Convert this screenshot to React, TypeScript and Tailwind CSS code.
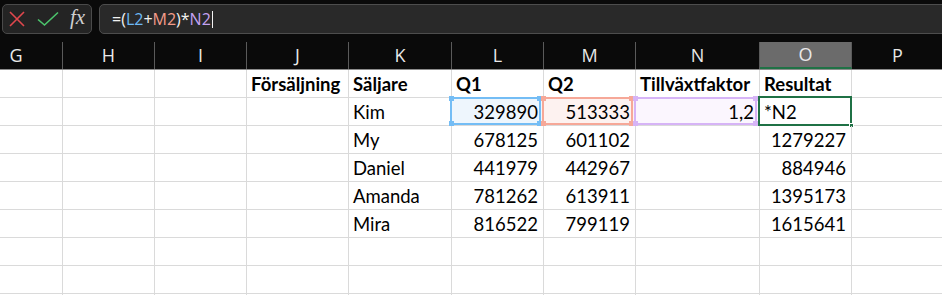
type MarkT = "blue" | "red" | "purple" | "active";

type CellT = {
  text?: string;
  bold?: boolean;
  right?: boolean;
  mark?: MarkT;
};

// column widths G..P, border included
const colWidths = [
  "w-[93px] -ml-[30px]",
  "w-[92px]",
  "w-[92px]",
  "w-[102px]",
  "w-[103px]",
  "w-[92px]",
  "w-[92px]",
  "w-[124px]",
  "w-[92px]",
  "w-[92px]",
];

const letters = ["G", "H", "I", "J", "K", "L", "M", "N", "O", "P"];

const people: [string, string, string, string][] = [
  ["My", "678125", "601102", "1279227"],
  ["Daniel", "441979", "442967", "884946"],
  ["Amanda", "781262", "613911", "1395173"],
  ["Mira", "816522", "799119", "1615641"],
];

function buildRows(): CellT[][] {
  const empty = (): CellT => ({});
  const rows: CellT[][] = [];

  rows.push([
    empty(),
    empty(),
    empty(),
    { text: "Försäljning", bold: true },
    { text: "Säljare", bold: true },
    { text: "Q1", bold: true },
    { text: "Q2", bold: true },
    { text: "Tillväxtfaktor", bold: true },
    { text: "Resultat", bold: true },
    empty(),
  ]);

  rows.push([
    empty(),
    empty(),
    empty(),
    empty(),
    { text: "Kim" },
    { text: "329890", right: true, mark: "blue" },
    { text: "513333", right: true, mark: "red" },
    { text: "1,2", right: true, mark: "purple" },
    { text: "*N2", mark: "active" },
    empty(),
  ]);

  people.forEach(([name, q1, q2, res]) => {
    rows.push([
      empty(),
      empty(),
      empty(),
      empty(),
      { text: name },
      { text: q1, right: true },
      { text: q2, right: true },
      empty(),
      { text: res, right: true },
      empty(),
    ]);
  });

  for (let i = 0; i < 3; i++) {
    rows.push(letters.map(() => empty()));
  }
  return rows;
}

const markStyles: Record<Exclude<MarkT, "active">, { bg: string; border: string; dot: string }> = {
  blue: { bg: "bg-[#eef6fd]", border: "border-[#74bdf5]", dot: "bg-[#74bdf5]" },
  red: { bg: "bg-[#fdf2f0]", border: "border-[#f6a898]", dot: "bg-[#f6a898]" },
  purple: { bg: "bg-[#fbf6fe]", border: "border-[#d6b4f6]", dot: "bg-[#d6b4f6]" },
};

function RangeBox({ mark }: { mark: MarkT }) {
  if (mark === "active") {
    return (
      <div className="absolute -top-[2px] -left-[2px] -right-px -bottom-px border-2 border-[#1f7145]">
        <div className="absolute -right-[4px] -bottom-[4px] w-[5px] h-[5px] bg-[#1f7145] border border-white" />
      </div>
    );
  }
  const s = markStyles[mark];
  return (
    <div className={`absolute -top-px -left-[2px] right-[2px] bottom-0 border-2 ${s.border}`}>
      <div className={`absolute -top-[3px] -left-[3px] w-[5px] h-[5px] ${s.dot}`} />
      <div className={`absolute -top-[3px] -right-[3px] w-[5px] h-[5px] ${s.dot}`} />
      <div className={`absolute -bottom-[3px] -left-[3px] w-[5px] h-[5px] ${s.dot}`} />
      <div className={`absolute -bottom-[3px] -right-[3px] w-[5px] h-[5px] ${s.dot}`} />
    </div>
  );
}

function Cell({ cell, width }: { cell: CellT; width: string }) {
  const bg = cell.mark && cell.mark !== "active" ? markStyles[cell.mark].bg : "";
  return (
    <div
      className={`relative shrink-0 h-full border-r border-[#dadada] flex items-end pb-[2px] pl-[4px] pr-[5px] leading-[22px] whitespace-nowrap ${width} ${bg} ${
        cell.right ? "justify-end" : ""
      } ${cell.bold ? "font-bold" : ""}`}>
      {cell.text}
      {cell.mark && <RangeBox mark={cell.mark} />}
    </div>
  );
}

function FormulaBar() {
  return (
    <div className="h-[42px] bg-[#0a0a0a] pt-[4px] flex items-start">
      <div className="ml-[2px] w-[90px] h-[30px] rounded-[5px] border border-[#4a4a4a] bg-[#242424] flex items-center pl-[6px]">
        <svg width="16" height="16" viewBox="0 0 16 16" className="shrink-0">
          <path d="M1 1 L15 15 M15 1 L1 15" stroke="#e0474d" strokeWidth="1.6" fill="none" />
        </svg>
        <svg width="22" height="16" viewBox="0 0 22 16" className="ml-[12px] shrink-0">
          <path d="M1 8.5 L7.5 14 L21 1.5" stroke="#4cc46c" strokeWidth="1.6" fill="none" />
        </svg>
        <span className="ml-[11px] text-[21px] italic leading-none text-[#cfcfcf] font-['Liberation_Serif',serif] -mt-[3px]">
          fx
        </span>
      </div>
      <div className="ml-[7px] flex-1 -mr-[10px] h-[30px] rounded-[5px] border border-[#4d4d4d] bg-[#292929] flex items-center pl-[12px] text-[16px] text-[#f2f2f2] font-['Open_Sans',sans-serif]">
        <span>=(</span>
        <span className="text-[#6db8f5]">L2</span>
        <span>+</span>
        <span className="text-[#f49c8a]">M2</span>
        <span>)*</span>
        <span className="text-[#c4a2f2]">N2</span>
        <span className="ml-px w-px h-[17px] bg-[#f2f2f2]" />
      </div>
    </div>
  );
}

function ColumnHeaders() {
  return (
    <div className="flex h-[28px] bg-[#0a0a0a] border-b border-[#8c8c8c] font-['Open_Sans',sans-serif] text-[18px] text-[#e8e8e8]">
      {letters.map((l, i) => (
        <div
          key={l}
          className={`shrink-0 h-full flex items-center justify-center border-r border-[#5a5a5a] ${colWidths[i]} ${
            l === "O" ? "bg-[#6b6b6b] border-b-2 border-b-[#1f7145]" : ""
          }`}>
          {l}
        </div>
      ))}
    </div>
  );
}

export default function App() {
  const rows = buildRows();
  return (
    <div className="w-[942px] h-[295px] overflow-hidden bg-white">
      <FormulaBar />
      <ColumnHeaders />
      <div className="font-['Lato',sans-serif] text-[18.5px] text-black">
        {rows.map((row, r) => (
          <div key={r} className="flex h-[28px] border-b border-[#dadada]">
            {row.map((cell, c) => (
              <Cell key={c} cell={cell} width={colWidths[c]} />
            ))}
          </div>
        ))}
      </div>
    </div>
  );
}
